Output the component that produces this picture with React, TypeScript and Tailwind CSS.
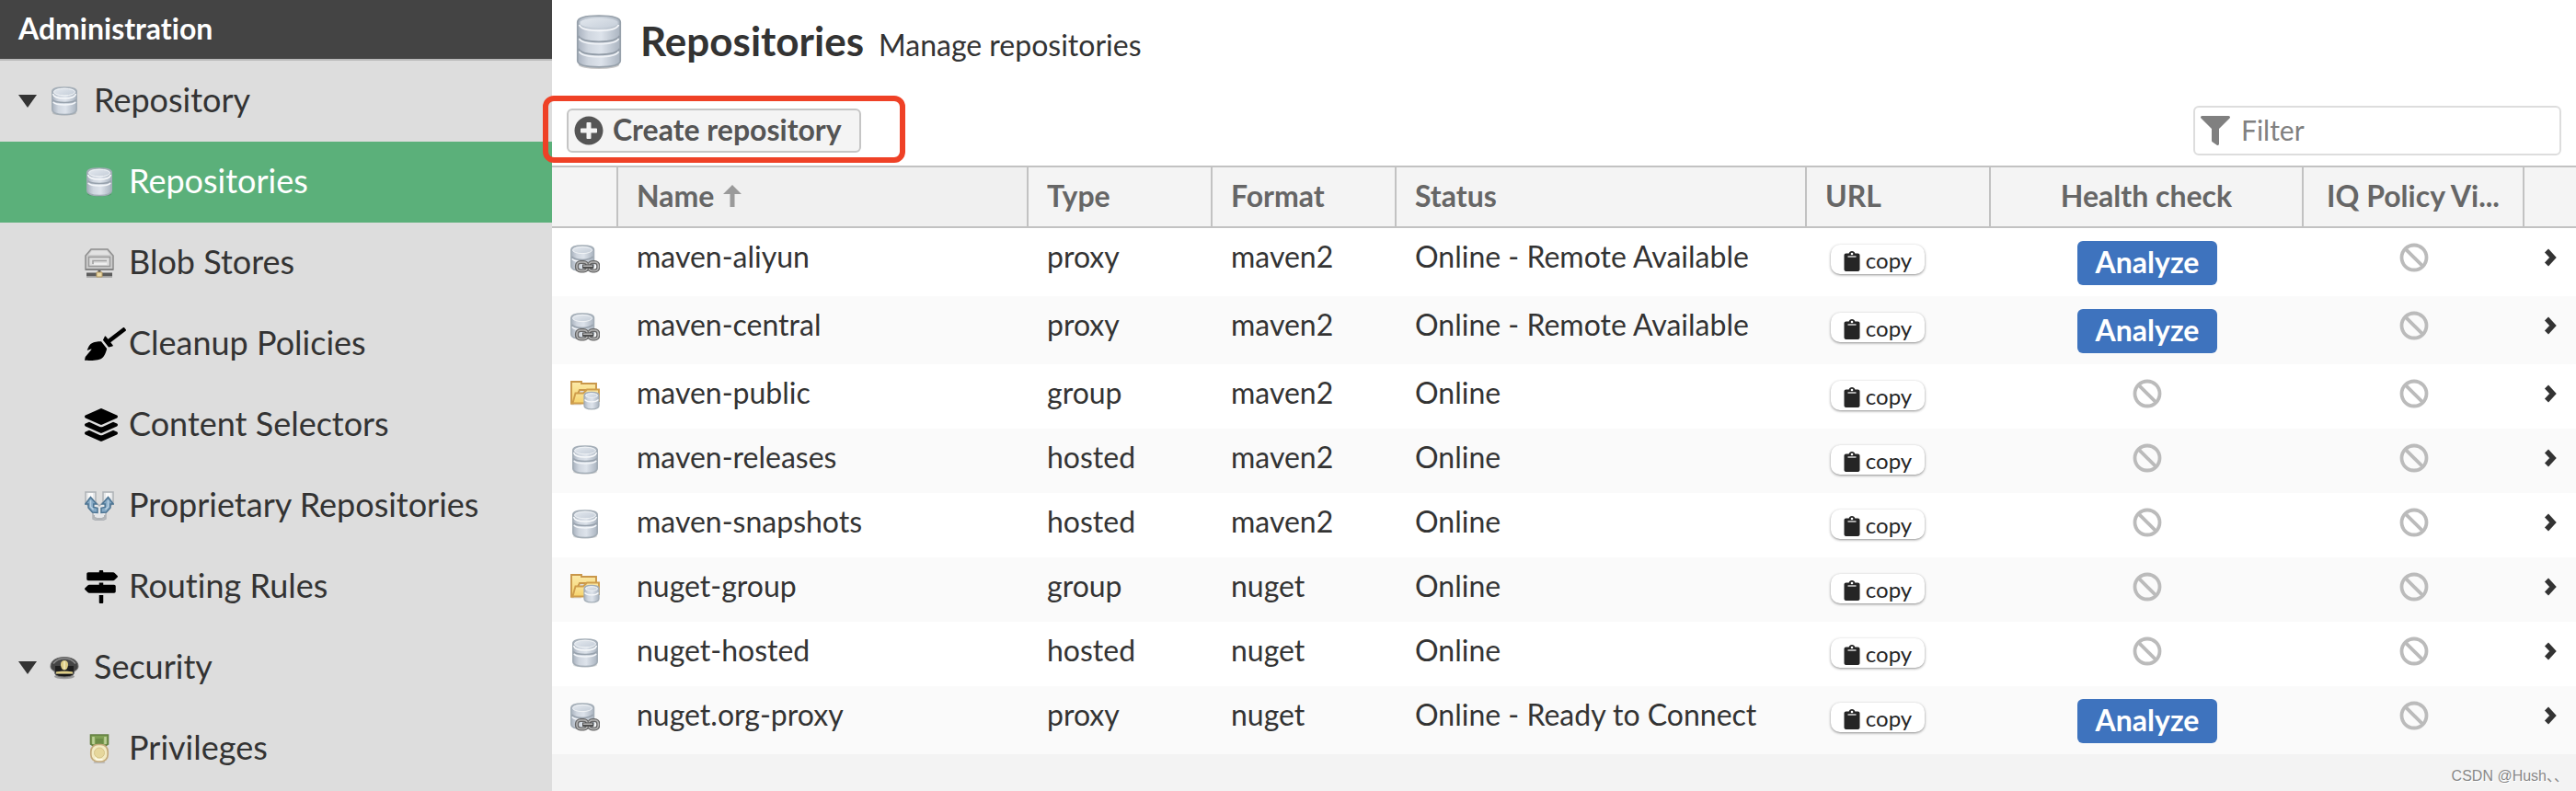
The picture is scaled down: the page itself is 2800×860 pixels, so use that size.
import type { ReactNode } from "react";
import { FaBroom, FaFilter, FaLayerGroup, FaMapSigns, FaPlusCircle } from "react-icons/fa";

type RepoType = "proxy" | "group" | "hosted";

interface Repo {
  name: string;
  type: RepoType;
  format: string;
  status: string;
  analyze: boolean;
}

const repos: Repo[] = [
  { name: "maven-aliyun", type: "proxy", format: "maven2", status: "Online - Remote Available", analyze: true },
  { name: "maven-central", type: "proxy", format: "maven2", status: "Online - Remote Available", analyze: true },
  { name: "maven-public", type: "group", format: "maven2", status: "Online", analyze: false },
  { name: "maven-releases", type: "hosted", format: "maven2", status: "Online", analyze: false },
  { name: "maven-snapshots", type: "hosted", format: "maven2", status: "Online", analyze: false },
  { name: "nuget-group", type: "group", format: "nuget", status: "Online", analyze: false },
  { name: "nuget-hosted", type: "hosted", format: "nuget", status: "Online", analyze: false },
  { name: "nuget.org-proxy", type: "proxy", format: "nuget", status: "Online - Ready to Connect", analyze: true },
];

function Gradients() {
  return (
    <svg className="absolute size-0" aria-hidden="true">
      <defs>
        <linearGradient id="metal" x1="0" x2="1" y1="0" y2="0">
          <stop offset="0" stopColor="#a9b2bf" />
          <stop offset="0.25" stopColor="#cfd6df" />
          <stop offset="0.55" stopColor="#dde3eb" />
          <stop offset="1" stopColor="#aab4c0" />
        </linearGradient>
        <linearGradient id="lid" x1="0" x2="1" y1="0" y2="1">
          <stop offset="0" stopColor="#e4e9ef" />
          <stop offset="1" stopColor="#c3ccd7" />
        </linearGradient>
        <linearGradient id="folder" x1="0" x2="0" y1="0" y2="1">
          <stop offset="0" stopColor="#fbe9a8" />
          <stop offset="1" stopColor="#f6d36b" />
        </linearGradient>
      </defs>
    </svg>
  );
}

function DatabaseIcon() {
  return (
    <svg viewBox="0 0 32 32" className="size-8" aria-hidden="true">
      <ellipse cx="16" cy="29" rx="13" ry="2.6" fill="#000" opacity="0.14" />
      <path d="M2.8 5.5C2.8 2 8 1 16 1s13.2 1 13.2 4.500V25c0 4-5 5.500-13.200 5.500S2.800 29 2.800 25z" fill="url(#metal)" stroke="#a3adb6" strokeWidth="1.600" />
      <ellipse cx="16" cy="6" rx="11.500" ry="3.800" fill="url(#lid)" stroke="#f1f4f7" strokeWidth="1" />
      <path d="M3.500 8c1 4 6 5 12.500 5s11.500-1 12.500-5" fill="none" stroke="#f7f9fb" strokeWidth="1.500" />
      <path d="M3.200 14.500c2 2.200 7 3 12.800 3s10.800-.8 12.800-3" fill="none" stroke="#98a2ad" strokeWidth="1.700" />
      <path d="M3.800 17c2 2.200 6.500 3 12.200 3s10.200-.8 12.200-3" fill="none" stroke="#f3f6f9" strokeWidth="1.600" />
    </svg>
  );
}

function LargeDatabaseIcon() {
  return (
    <svg viewBox="0 0 50 60" className="h-[60px] w-[50px]" aria-hidden="true">
      <ellipse cx="25" cy="54.500" rx="22" ry="4.500" fill="#000" opacity="0.22" />
      <path d="M1.800 8C1.800 3 11 1.200 25 1.200S48.200 3 48.200 8v42c0 4.800-9 6.800-23.200 6.800S1.800 54.800 1.800 50z" fill="url(#metal)" stroke="#97a1ab" strokeWidth="1.800" />
      <ellipse cx="25" cy="9" rx="21" ry="6.300" fill="url(#lid)" stroke="#bcc5cf" strokeWidth="1" />
      <path d="M3.500 11c2 5 10 6.300 21.500 6.300S44.500 16 46.500 11" fill="none" stroke="#f4f6f9" strokeWidth="1.800" />
      <path d="M2.500 23c2.500 4.800 11 6.300 22.500 6.300S45 27.800 47.500 23M2.500 37c2.500 4.800 11 6.300 22.500 6.300S45 41.800 47.500 37" fill="none" stroke="#929ca7" strokeWidth="1.700" />
      <path d="M3.500 26c2.500 4.500 10.500 5.700 21.500 5.700S44 30.500 46.500 26M3.500 40c2.500 4.500 10.500 5.700 21.500 5.700S44 44.500 46.500 40" fill="none" stroke="#eff2f6" strokeWidth="1.600" />
    </svg>
  );
}

function ProxyIcon() {
  return (
    <svg viewBox="0 0 32 32" className="size-8" aria-hidden="true">
      <path d="M.8 5.500C.8 2 6 1 13 1s12.500 1 12.500 4.500V23c0 4-5 5.500-12.500 5.500S.8 27 .8 23z" fill="url(#metal)" stroke="#a3adb6" strokeWidth="1.500" />
      <ellipse cx="13" cy="6" rx="10.500" ry="3.600" fill="url(#lid)" stroke="#f1f4f7" />
      <path d="M1.500 13c2 2.600 6.500 3.400 11.500 3.400s9.500-.8 11.500-3.400" fill="none" stroke="#98a2ad" strokeWidth="1.500" />
      <path d="M1.800 15.500c2 2.200 6.500 3 11.200 3" fill="none" stroke="#f3f6f9" strokeWidth="1.500" />
      <rect x="7" y="19" width="11.500" height="9.500" rx="4" fill="none" stroke="#666" strokeWidth="4.200" />
      <rect x="20" y="19" width="10.300" height="9.500" rx="4" fill="none" stroke="#666" strokeWidth="4.200" />
      <rect x="7" y="19" width="11.500" height="9.500" rx="4" fill="none" stroke="#b5b5b5" strokeWidth="1.600" />
      <rect x="20" y="19" width="10.300" height="9.500" rx="4" fill="none" stroke="#b5b5b5" strokeWidth="1.600" />
      <path d="M13 23.700h12" stroke="#4d4d4d" strokeWidth="4.500" />
      <path d="M14 23.200h10" stroke="#bdbdbd" strokeWidth="1.500" />
    </svg>
  );
}

function GroupIcon() {
  return (
    <svg viewBox="0 0 32 32" className="size-8" aria-hidden="true">
      <path d="M1 25V1h11v2.500h16V9h3v13H12v3z" fill="#000" opacity="0.12" transform="translate(0 1.500)" />
      <path d="M1 24.500V1h11v2h16v7H10L3 24.500z" fill="url(#folder)" stroke="#c9974a" strokeWidth="1.900" />
      <path d="M3 22.500l2.500-9H14l4-4h13V22H16v2.500H1.500z" fill="url(#folder)" stroke="#cf9d4b" strokeWidth="1.900" />
      <path d="M15 16c0-2.500 3-3.500 8-3.500s8 1 8 3.500v11c0 2.800-3 3.800-8 3.800s-8-1-8-3.800z" fill="url(#metal)" stroke="#a3adb6" strokeWidth="1.300" />
      <ellipse cx="23" cy="16" rx="6.500" ry="2.300" fill="url(#lid)" stroke="#f1f4f7" />
      <path d="M15.500 20.500c2 2 4.500 2.400 7.500 2.400s5.500-.4 7.500-2.400" fill="none" stroke="#f5f7f9" strokeWidth="1.300" />
    </svg>
  );
}

function DriveIcon() {
  return (
    <svg viewBox="0 0 32 32" className="size-8" aria-hidden="true">
      <path d="M7 1h18l6 7v15H1V8z" fill="#cbcbcb" stroke="#8f8f8f" strokeWidth="1.600" />
      <path d="M8 2.500h16l3.500 4.500h-23z" fill="#e2e2e2" />
      <rect x="4.500" y="9.500" width="23" height="10" fill="#dedede" stroke="#9a9a9a" strokeWidth="1.500" />
      <path d="M9 17v-3.500h15" fill="none" stroke="#a2a2a2" strokeWidth="1.600" />
      <path d="M10 17h14" stroke="#f3f3f3" strokeWidth="1.600" />
      <path d="M1 23h30" stroke="#838383" strokeWidth="2" />
      <path d="M16 24v4" stroke="#555" strokeWidth="3" />
      <path d="M2 28.500h28" stroke="#5c5c5c" strokeWidth="4" />
      <path d="M2 31.300h28" stroke="#a9a9a9" strokeWidth="1.300" />
      <path d="M13 26h6v5h-6z" fill="#ead9a8" stroke="#b59a63" />
    </svg>
  );
}

function ProprietaryIcon() {
  return (
    <svg viewBox="0 0 32 32" className="size-8" aria-hidden="true">
      <path d="M1 1h11v11l4 4 4-4V1h11v12l-8 8v9l-3 1.500h-8L9 30v-9l-8-8z" fill="#e6e8ea" stroke="#aeb2b6" strokeWidth="1.500" />
      <path d="M4 2h5v5H4zM23 2h5v5h-5z" fill="#fafafa" />
      <path d="M6.500 6.500l6.500 7.500H9.800v3.500l4.200.8v5.200l-5.500-.5-4.500-5V14H.8z" fill="#85a9c5" stroke="#4c7493" strokeWidth="1.500" />
      <path d="M25.500 6.500L19 14h3.200v3.500l-4.200.8v5.200l5.500-.5 4.500-5V14h3.200z" fill="#85a9c5" stroke="#4c7493" strokeWidth="1.500" />
      <path d="M6.500 10v7l3 3M25.500 10v7l-3 3" fill="none" stroke="#bcd3e4" strokeWidth="1.500" />
      <path d="M10 26v2.500l3 1.500h6l3-1.500V26" fill="none" stroke="#b0b3b6" strokeWidth="2" />
    </svg>
  );
}

function OfficerCapIcon() {
  return (
    <svg viewBox="0 0 32 32" className="size-8" aria-hidden="true">
      <ellipse cx="16" cy="25.500" rx="11" ry="2.800" fill="#000" opacity="0.3" />
      <path d="M1 14.500C1 8 8 4.500 16 4.500s15 3.500 15 10c0 2.500-1.500 4-4 5l-1 3.500c-1.500 2-5 3-10 3s-8.500-1-10-3l-1-3.500c-2.500-1-4-2.500-4-5z" fill="#454545" stroke="#6d6d6d" />
      <path d="M4 11.500c3-4 7-5.500 12-5.500s9 1.500 12 5.500" fill="none" stroke="#8c8c8c" strokeWidth="1.600" />
      <path d="M6 14h20v7c-3-2-17-2-20 0z" fill="#1f1f1f" />
      <path d="M7 20.500c3-1 15-1 18 0v2H7z" fill="#e0cf87" />
      <path d="M6.500 23c3 3 16 3 19 0z" fill="#151515" />
      <path d="M16 8c2.500 0 4 1.500 4 4.500s-1.500 6-4 6-4-3-4-6S13.500 8 16 8z" fill="#dccb84" />
      <path d="M16 9v9" stroke="#f2e9bd" strokeWidth="1.600" />
    </svg>
  );
}

function MedalIcon() {
  return (
    <svg viewBox="0 0 32 32" className="size-8" aria-hidden="true">
      <path d="M6.500 1h19v10l-4 2.500h-11L6.500 11z" fill="#7fa054" stroke="#637f40" strokeWidth="1.600" />
      <path d="M9.500 3v8M22.500 3v8" stroke="#bcd097" strokeWidth="2.600" />
      <path d="M12 5h8v6h-8z" fill="#6d8d47" />
      <path d="M10 30.500c3 1.500 9 1.500 12 0" stroke="#000" strokeOpacity="0.15" strokeWidth="2" fill="none" />
      <rect x="6.800" y="11.500" width="18.400" height="18.500" rx="7.500" fill="#f3ebc3" stroke="#c3a97b" strokeWidth="1.700" />
      <circle cx="16" cy="20.500" r="5.500" fill="#e6d79c" stroke="#d6c489" />
      <path d="M11.500 25.500l2 2.500h6" stroke="#fdfae6" strokeWidth="1.800" fill="none" />
    </svg>
  );
}

function BanIcon() {
  return (
    <svg viewBox="0 0 32 32" className="mx-auto block size-8" role="img" aria-label="Not available">
      <circle cx="16" cy="16" r="13.500" fill="none" stroke="#bbbbbb" strokeWidth="3.800" />
      <path d="M6.800 6.800l18.400 18.400" stroke="#bbbbbb" strokeWidth="3.800" />
    </svg>
  );
}

function ClipboardIcon() {
  return (
    <svg viewBox="0 0 18 22" className="h-[22px] w-[18px] shrink-0" aria-hidden="true">
      <path d="M2.500 2.500h3.200C6 1 7.300 0 9 0s3 1 3.300 2.500h3.200c1 0 2 .9 2 2V20c0 1.100-.9 2-2 2h-13c-1.100 0-2-.9-2-2V4.500c0-1.100.9-2 2-2z" fill="#252525" />
      <circle cx="9" cy="3" r="1.300" fill="#fff" />
      <path d="M4.500 5.200h9v1.600h-9z" fill="#cfcfcf" />
    </svg>
  );
}

const typeIcons: Record<RepoType, ReactNode> = {
  proxy: <ProxyIcon />,
  group: <GroupIcon />,
  hosted: <DatabaseIcon />,
};

interface NavProps {
  icon: ReactNode;
  label: string;
  parent?: boolean;
  active?: boolean;
}

function NavItem({ icon, label, parent, active }: NavProps) {
  return (
    <a
      href="#"
      aria-current={active ? "page" : undefined}
      className={`flex h-[88px] items-center text-[36px] ${parent ? "pl-5" : "pl-[92px]"} ${
        active ? "bg-[#5bb07a] text-white" : "text-[#333333]"
      }`}
    >
      {parent && (
        <svg viewBox="0 0 20 14" className="mr-[14px] h-[14px] w-5 shrink-0" aria-hidden="true">
          <path d="M0 0h20L10 14z" fill="#333333" />
        </svg>
      )}
      <span className="w-12 shrink-0 text-black">{icon}</span>
      <span className="pb-1 leading-[42px]">{label}</span>
    </a>
  );
}

function Sidebar() {
  return (
    <nav aria-label="Administration" className="w-[600px] shrink-0 bg-[#dddddd]">
      <h2 className="flex h-[66px] items-center border-b-2 border-[#bbbbbb] bg-[#444444] pb-[2px] pl-5 text-[32px] font-bold text-white">
        Administration
      </h2>
      <NavItem parent icon={<DatabaseIcon />} label="Repository" />
      <NavItem active icon={<DatabaseIcon />} label="Repositories" />
      <NavItem icon={<DriveIcon />} label="Blob Stores" />
      <NavItem icon={<FaBroom className="h-9 w-[45px]" />} label="Cleanup Policies" />
      <NavItem icon={<FaLayerGroup />} label="Content Selectors" />
      <NavItem icon={<ProprietaryIcon />} label="Proprietary Repositories" />
      <NavItem icon={<FaMapSigns />} label="Routing Rules" />
      <NavItem parent icon={<OfficerCapIcon />} label="Security" />
      <NavItem icon={<MedalIcon />} label="Privileges" />
    </nav>
  );
}

const headCell = "h-[68px] border-y-2 border-r-2 border-[#c2c2c2] px-5 pb-[2px] font-bold whitespace-nowrap overflow-hidden last:border-r-0";
const textCell = "px-5 pt-[11px] whitespace-nowrap";

function RepoTable() {
  return (
    <table className="w-full table-fixed border-separate border-spacing-0 text-left text-[32px] leading-10 text-[#333333]">
      <colgroup>
        <col className="w-[72px]" />
        <col />
        <col className="w-[200px]" />
        <col className="w-[200px]" />
        <col />
        <col className="w-[200px]" />
        <col className="w-[340px]" />
        <col className="w-[240px]" />
        <col className="w-[56px]" />
      </colgroup>
      <thead className="bg-[#f4f4f4] text-[#666666]">
        <tr>
          <th className={headCell} aria-label="Kind" />
          <th className={`${headCell} bg-[#f0f0f0]`} aria-sort="ascending">
            <span className="flex items-center gap-[10px]">
              Name
              <svg viewBox="0 0 20 24" className="h-6 w-5" aria-hidden="true">
                <path d="M10 0l10 10h-7.500v14h-5V10H0z" fill="#9a9a9a" />
              </svg>
            </span>
          </th>
          <th className={headCell}>Type</th>
          <th className={headCell}>Format</th>
          <th className={headCell}>Status</th>
          <th className={headCell}>URL</th>
          <th className={`${headCell} text-center`}>Health check</th>
          <th className={`${headCell} text-center`}>IQ Policy Vi...</th>
          <th className={headCell} aria-label="Open" />
        </tr>
      </thead>
      <tbody>
        {repos.map((repo) => (
          <tr key={repo.name} className={`bg-white align-top even:bg-[#fafafa] ${repo.analyze ? "h-[74px]" : "h-[70px]"}`}>
            <td className="pt-[18px] pl-5">{typeIcons[repo.type]}</td>
            <td className={textCell}>{repo.name}</td>
            <td className={textCell}>{repo.type}</td>
            <td className={textCell}>{repo.format}</td>
            <td className={textCell}>{repo.status}</td>
            <td className="pt-[18px] pl-[26px]">
              <button
                type="button"
                className="flex h-8 w-[102px] items-center justify-center gap-[6px] rounded-[10px] bg-white pt-1 text-[24px] leading-6 text-[#252525] shadow-[0_1px_3px_rgba(0,0,0,0.45)]"
              >
                <ClipboardIcon />
                <span className="pb-[2px]">copy</span>
              </button>
            </td>
            {repo.analyze ? (
              <td className="pt-[14px]">
                <button type="button" className="mx-auto flex h-12 w-[152px] justify-center rounded-md bg-[#3e73be] pt-[3px] font-bold text-white">
                  Analyze
                </button>
              </td>
            ) : (
              <td className="pt-4">
                <BanIcon />
              </td>
            )}
            <td className="pt-4">
              <BanIcon />
            </td>
            <td className="pt-[22px] pl-[21px]">
              <svg viewBox="0 0 14 20" className="h-5 w-[14px]" aria-hidden="true">
                <path d="M3 2.500l7 7.500-7 7.500" fill="none" stroke="#333333" strokeWidth="5.500" />
              </svg>
            </td>
          </tr>
        ))}
      </tbody>
    </table>
  );
}

export default function App() {
  return (
    <div className="relative flex min-h-screen bg-white font-['Lato','Noto_Sans_CJK_SC',sans-serif] text-[#333333] [font-variant-ligatures:none]">
      <Gradients />
      <Sidebar />
      <main className="flex min-w-0 flex-1 flex-col bg-[#f3f3f3]">
        <header className="flex h-[100px] items-start bg-white pt-4 pl-[26px]">
          <LargeDatabaseIcon />
          <div className="flex items-baseline gap-4 pl-5">
            <h1 className="text-[44px] leading-[56px] font-bold">Repositories</h1>
            <p className="text-[32px]">Manage repositories</p>
          </div>
        </header>
        <div className="relative flex h-20 items-center justify-between bg-white pt-1 pr-4 pl-4">
          <button
            type="button"
            className="flex h-12 w-80 items-center gap-[10px] rounded-md border-2 border-[#c5c5c5] bg-[#f4f4f4] pl-[6px] text-[32px] font-bold text-[#555555]"
          >
            <FaPlusCircle className="size-8 shrink-0" />
            <span className="pb-[2px] leading-10 whitespace-nowrap">Create repository</span>
          </button>
          <label className="flex h-[54px] w-[400px] items-center gap-3 rounded-md border-2 border-[#dddddd] bg-white pl-[6px] text-[#808080]">
            <FaFilter className="size-8 shrink-0" />
            <input
              type="text"
              aria-label="Filter"
              placeholder="Filter"
              className="w-full min-w-0 bg-transparent pb-[2px] text-[30px] outline-none placeholder:text-[#808080]"
            />
          </label>
          {/* Callout drawn over the create button */}
          <div className="pointer-events-none absolute top-1 -left-[10px] h-[73px] w-[394px] rounded-xl border-6 border-[#ef4126]" />
        </div>
        <RepoTable />
      </main>
      <p className="absolute right-2 bottom-1 font-['Liberation_Sans','Noto_Sans_CJK_SC',sans-serif] text-[16px] leading-6 text-[#888888] [text-shadow:1px_1px_0_#ffffff]">
        CSDN @Hush、、
      </p>
    </div>
  );
}
